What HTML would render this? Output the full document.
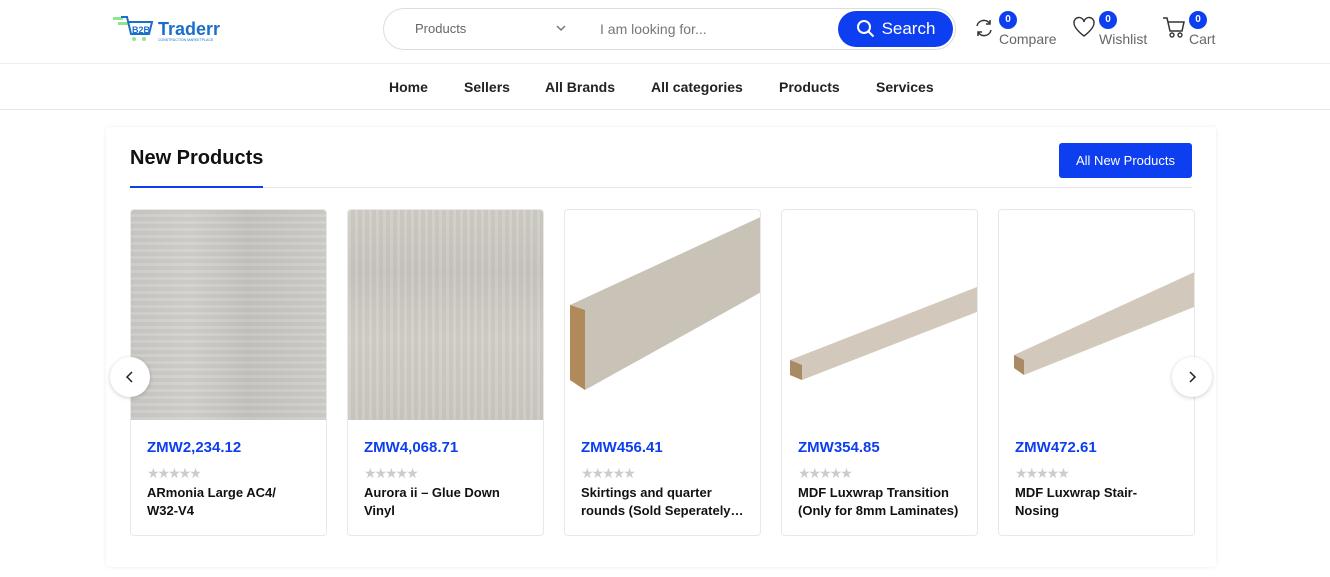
<!DOCTYPE html>
<html><head><meta charset="utf-8"><style>
*{box-sizing:border-box;margin:0;padding:0}
body{width:1330px;height:577px;background:#fff;font-family:"Liberation Sans",Arial,sans-serif;position:relative;overflow:hidden;color:#111}
.abs{position:absolute}
.search{left:383px;top:8px;width:573px;height:42px;border:1px solid #ddd;border-radius:21px}
.btn{left:838px;top:11px;width:115px;height:36px;background:#0d3ef0;border-radius:18px;color:#fff;font-size:17px;display:flex;align-items:center;justify-content:center;gap:6px}
.badge{width:18px;height:18px;border-radius:9px;background:#0d3ef0;color:#fff;font-size:10px;font-weight:bold;text-align:center;line-height:18px}
.lbl{font-size:14px;color:#666}
.nav{top:63px;left:0;width:1330px;height:47px;border-top:1px solid #eee;border-bottom:1px solid #e6e6e6}
.nav span{position:absolute;top:15px;font-size:14px;font-weight:bold;color:#222}
.box{left:106px;top:127px;width:1110px;height:440px;border-radius:4px;box-shadow:0 0 4px rgba(0,0,0,.08)}
.card{top:209px;width:197px;height:327px;border:1px solid #e8e8e8;border-radius:4px;overflow:hidden}
.card .img{height:210px;display:block}
.price{position:absolute;left:16px;top:229px;color:#0d3ef0;font-weight:bold;font-size:15px}
.stars{position:absolute;left:16px;top:255px;color:#ccc;font-size:14px;letter-spacing:-2px}
.name{position:absolute;left:16px;top:274px;font-size:13px;font-weight:bold;line-height:18px;color:#111;white-space:nowrap}
.arrow{width:40px;height:40px;border-radius:20px;background:#fff;box-shadow:0 1px 4px rgba(0,0,0,.2);display:flex;align-items:center;justify-content:center}
</style></head><body>
<div class="abs" style="left:113px;top:14px">
<svg width="110" height="28"><g fill="#8ee68e"><rect x="0" y="3" width="10" height="3"/><rect x="5" y="8" width="10" height="3"/><circle cx="21" cy="25" r="2"/><circle cx="31" cy="25" r="2"/></g><path d="M8 3h6l4 17h18l3-12h-24" fill="none" stroke="#1a6fc9" stroke-width="2"/><text x="19" y="19" font-size="9" font-weight="bold" fill="#1a6fc9" font-family="Liberation Sans">B2B</text><text x="45" y="21" font-size="18" font-weight="bold" fill="#1a6fc9" font-family="Liberation Sans">Traderr</text><text x="45" y="27" font-size="3.5" fill="#1a6fc9" font-family="Liberation Sans">CONSTRUCTION MARKETPLACE</text></svg></div>
<div class="abs search"></div>
<div class="abs" style="left:415px;top:21px;font-size:13px;color:#666">Products</div>
<svg class="abs" style="left:555px;top:23px" width="12" height="10"><path d="M2 3l4 4 4-4" fill="none" stroke="#777" stroke-width="1.5"/></svg>
<div class="abs" style="left:600px;top:21px;font-size:14px;color:#777">I am looking for...</div>
<div class="abs btn"><svg width="20" height="20"><circle cx="8" cy="8" r="6" fill="none" stroke="#fff" stroke-width="2"/><path d="M12.5 12.5l5 5" stroke="#fff" stroke-width="2"/></svg>Search</div>
<svg class="abs" style="left:973px;top:17px" width="22" height="22"><path d="M4 9a7 7 0 0 1 13-2M18 13a7 7 0 0 1-13 2" fill="none" stroke="#333" stroke-width="1.5"/><path d="M17 3v4h-4M5 19v-4h4" fill="none" stroke="#333" stroke-width="1.5"/></svg>
<div class="abs badge" style="left:999px;top:11px">0</div><div class="abs lbl" style="left:999px;top:31px">Compare</div>
<svg class="abs" style="left:1072px;top:16px" width="24" height="22"><path d="M12 20S2 13 2 7a5 5 0 0 1 10-1 5 5 0 0 1 10 1c0 6-10 13-10 13z" fill="none" stroke="#333" stroke-width="1.4"/></svg>
<div class="abs badge" style="left:1099px;top:11px">0</div><div class="abs lbl" style="left:1099px;top:31px">Wishlist</div>
<svg class="abs" style="left:1162px;top:16px" width="24" height="24"><path d="M1 2h4l3 13h12l2-9H6" fill="none" stroke="#333" stroke-width="1.5"/><circle cx="10" cy="19" r="2" fill="none" stroke="#333" stroke-width="1.4"/><circle cx="18" cy="19" r="2" fill="none" stroke="#333" stroke-width="1.4"/></svg>
<div class="abs badge" style="left:1189px;top:11px">0</div><div class="abs lbl" style="left:1189px;top:31px">Cart</div>
<div class="abs nav"><span style="left:389px">Home</span><span style="left:464px">Sellers</span><span style="left:545px">All Brands</span><span style="left:651px">All categories</span><span style="left:779px">Products</span><span style="left:876px">Services</span></div>
<div class="abs box"></div>
<div class="abs" style="left:130px;top:147px;font-size:20px;font-weight:bold">New Products</div>
<div class="abs" style="left:130px;top:187px;width:1062px;height:1px;background:#e8e8e8"></div>
<div class="abs" style="left:130px;top:186px;width:133px;height:2px;background:#0d3ef0"></div>
<div class="abs" style="left:1059px;top:143px;width:133px;height:35px;background:#0d3ef0;border-radius:3px;color:#fff;font-size:13px;text-align:center;line-height:35px">All New Products</div>

<div class="abs card" style="left:130px"><div class="img" style="background:repeating-linear-gradient(0deg,rgba(255,255,255,.06) 0 3px,rgba(0,0,0,.03) 3px 7px),linear-gradient(90deg,#cbc9c5,#d3d1cd 30%,#c6c4c0 60%,#d0cecb)"></div><div class="price">ZMW2,234.12</div><div class="stars">★★★★★</div><div class="name">ARmonia Large AC4/<br>W32-V4</div></div>
<div class="abs card" style="left:347px"><div class="img" style="background:repeating-linear-gradient(90deg,rgba(255,255,255,.06) 0 3px,rgba(0,0,0,.03) 3px 7px),linear-gradient(0deg,#ccc8c2,#d3cfc9 40%,#c9c5bf 70%,#d1cdc7)"></div><div class="price">ZMW4,068.71</div><div class="stars">★★★★★</div><div class="name">Aurora ii – Glue Down<br>Vinyl</div></div>
<div class="abs card" style="left:564px"><svg class="img" width="197" height="210"><polygon points="5,95 200,5 200,80 20,180 5,170" fill="#c9c2b7"/><polygon points="5,95 20,100 20,180 5,170" fill="#b08a5a"/></svg><div class="price">ZMW456.41</div><div class="stars">★★★★★</div><div class="name">Skirtings and quarter<br>rounds (Sold Seperately…</div></div>
<div class="abs card" style="left:781px"><svg class="img" width="197" height="210"><polygon points="8,150 200,75 200,100 20,170 8,165" fill="#d2c9bc"/><polygon points="8,150 20,155 20,170 8,165" fill="#a88a65"/></svg><div class="price">ZMW354.85</div><div class="stars">★★★★★</div><div class="name">MDF Luxwrap Transition<br>(Only for 8mm Laminates)</div></div>
<div class="abs card" style="left:998px"><svg class="img" width="197" height="210"><polygon points="15,145 200,60 200,95 25,165 15,158" fill="#d2c9bc"/><polygon points="15,145 25,150 25,165 15,158" fill="#a88a65"/></svg><div class="price">ZMW472.61</div><div class="stars">★★★★★</div><div class="name">MDF Luxwrap Stair-<br>Nosing</div></div>

<div class="abs arrow" style="left:110px;top:357px"><svg width="12" height="12"><path d="M8 1L3 6l5 5" fill="none" stroke="#222" stroke-width="1.5"/></svg></div>
<div class="abs arrow" style="left:1172px;top:357px"><svg width="12" height="12"><path d="M4 1l5 5-5 5" fill="none" stroke="#222" stroke-width="1.5"/></svg></div>
</body></html>
